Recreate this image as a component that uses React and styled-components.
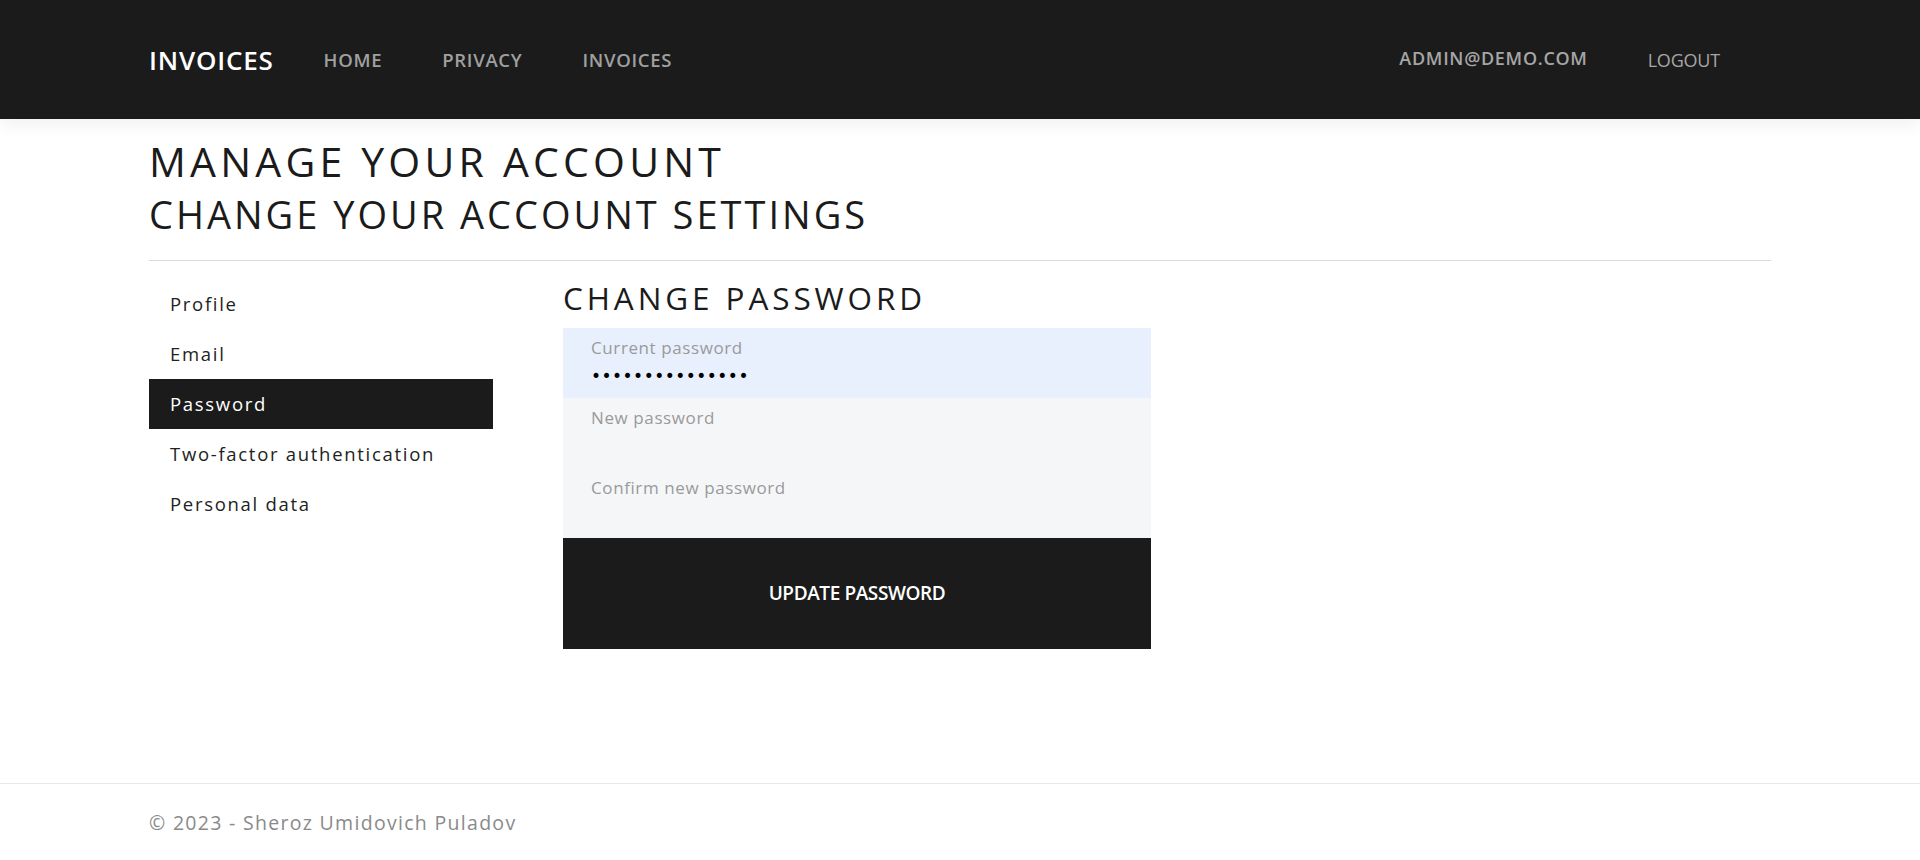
import styled, { createGlobalStyle } from "styled-components";

const GlobalStyle = createGlobalStyle`
  body {
    margin: 0;
    background: #fff;
    font-family: "Open Sans", "Noto Sans", sans-serif;
    color: #1b1b1b;
  }
  * { box-sizing: border-box; }
`;

const menu = [
  "Profile",
  "Email",
  "Password",
  "Two-factor authentication",
  "Personal data",
];

export default function App() {
  return (
    <>
      <GlobalStyle />
      <Page>
        <NavBar>
          <NavInner>
            <Brand>INVOICES</Brand>
            <NavLinks>
              <NavLink>HOME</NavLink>
              <NavLink>PRIVACY</NavLink>
              <NavLink>INVOICES</NavLink>
            </NavLinks>
            <UserLinks>
              <UserLink $raised>ADMIN@DEMO.COM</UserLink>
              <UserLink $thin>LOGOUT</UserLink>
            </UserLinks>
          </NavInner>
        </NavBar>

        <Main>
          <Title>MANAGE YOUR ACCOUNT</Title>
          <Subtitle>CHANGE YOUR ACCOUNT SETTINGS</Subtitle>
          <Divider />
          <Columns>
            <SideMenu>
              {menu.map((item) => (
                <MenuItem key={item} $active={item === "Password"}>
                  {item}
                </MenuItem>
              ))}
            </SideMenu>
            <Panel>
              <PanelTitle>CHANGE PASSWORD</PanelTitle>
              <Form onSubmit={(e) => e.preventDefault()}>
                <Field $filled>
                  <FieldLabel>Current password</FieldLabel>
                  <FieldInput type="password" defaultValue="Password123456!" readOnly />
                </Field>
                <Field>
                  <FieldLabel>New password</FieldLabel>
                  <FieldInput type="password" readOnly />
                </Field>
                <Field>
                  <FieldLabel>Confirm new password</FieldLabel>
                  <FieldInput type="password" readOnly />
                </Field>
                <SubmitButton type="submit">UPDATE PASSWORD</SubmitButton>
              </Form>
            </Panel>
          </Columns>
        </Main>

        <Footer>
          <FooterText>© 2023 - Sheroz Umidovich Puladov</FooterText>
        </Footer>
      </Page>
    </>
  );
}

const Page = styled.div`
  min-height: 860px;
  display: flex;
  flex-direction: column;
`;

const NavBar = styled.header`
  background: #1b1b1b;
  height: 119px;
  box-shadow: 0 6px 16px rgba(0, 0, 0, 0.06);
  position: relative;
  z-index: 1;
`;

const NavInner = styled.nav`
  height: 100%;
  padding: 0 149px;
  display: flex;
  align-items: center;
`;

const Brand = styled.a`
  color: #fff;
  font-size: 26px;
  font-weight: 600;
  letter-spacing: 0.8px;
  margin-right: 50px;
`;

const NavLinks = styled.div`
  display: flex;
  gap: 60px;
  flex: 1;
`;

const NavLink = styled.a`
  color: #a0a0a0;
  font-size: 18.5px;
  font-weight: 600;
  letter-spacing: 0.7px;
`;

const UserLinks = styled.div`
  display: flex;
  align-items: center;
  gap: 60px;
  margin-right: 51px;
`;

const UserLink = styled.a`
  color: #a6a6a6;
  font-size: 18px;
  font-weight: ${(p) => (p.$thin ? 400 : 600)};
  letter-spacing: ${(p) => (p.$thin ? "-0.2px" : "0.7px")};
  transform: ${(p) => (p.$raised ? "translateY(-2px)" : "none")};
`;

const Main = styled.main`
  flex: 1;
  padding: 0 149px;
`;

const Title = styled.h1`
  margin: 18px 0 0;
  font-size: 41px;
  font-weight: 400;
  letter-spacing: 4.2px;
  line-height: 1.2;
`;

const Subtitle = styled.h2`
  margin: 6px 0 0;
  font-size: 38px;
  font-weight: 400;
  letter-spacing: 3px;
  line-height: 1.2;
`;

const Divider = styled.hr`
  margin: 22px 0 0;
  border: 0;
  border-top: 1px solid #dcdcdc;
`;

const Columns = styled.div`
  display: grid;
  grid-template-columns: 344px 588px;
  gap: 70px;
  padding-top: 18px;
`;

const SideMenu = styled.ul`
  list-style: none;
  margin: 0;
  padding: 0;
`;

const MenuItem = styled.li`
  height: 50px;
  display: flex;
  align-items: center;
  padding-left: 21px;
  font-size: 18.5px;
  letter-spacing: 1.7px;
  background: ${(p) => (p.$active ? "#1b1b1b" : "transparent")};
  color: ${(p) => (p.$active ? "#fff" : "#222")};
`;

const Panel = styled.section``;

const PanelTitle = styled.h3`
  margin: 0 0 11px;
  font-size: 31.5px;
  font-weight: 400;
  letter-spacing: 3.9px;
  line-height: 1.2;
`;

const Form = styled.form`
  display: flex;
  flex-direction: column;
`;

const Field = styled.label`
  height: 70px;
  padding: 11px 28px 0;
  display: flex;
  flex-direction: column;
  gap: 10px;
  background: ${(p) => (p.$filled ? "#e8f0fe" : "#f5f6f8")};
`;

const FieldLabel = styled.span`
  font-size: 17px;
  line-height: 1;
  color: #9a9a9a;
  letter-spacing: 0.6px;
`;

const FieldInput = styled.input`
  border: 0;
  outline: 0;
  background: transparent;
  padding: 0;
  font-size: 17px;
  line-height: 1.2;
  font-family: "DejaVu Sans", sans-serif;
  color: #000;
  letter-spacing: 0.5px;
`;

const SubmitButton = styled.button`
  height: 111px;
  border: 0;
  background: #1b1b1b;
  color: #fff;
  font-family: inherit;
  font-size: 19px;
  font-weight: 600;
  letter-spacing: -0.4px;
  cursor: pointer;
`;

const Footer = styled.footer`
  border-top: 1px solid #e8e8e8;
  height: 77px;
  padding: 0 149px;
  display: flex;
  align-items: center;
`;

const FooterText = styled.span`
  font-size: 19.5px;
  color: #8a8a8a;
  letter-spacing: 1.3px;
`;
